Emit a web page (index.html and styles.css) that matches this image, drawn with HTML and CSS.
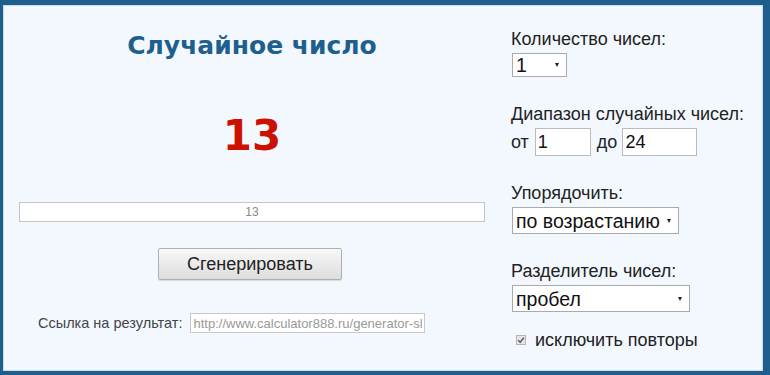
FILE: index.html
```html
<!DOCTYPE html>
<html lang="ru">
<head>
    <meta charset="UTF-8">
    <meta name="viewport" content="width=device-width, initial-scale=1.0">
    <title>Случайное число</title>
    <link rel="stylesheet" href="styles.css">
</head>
<body>
    <div id="gerador">
        <div id="resultado">
            <h1 id="titulo">Случайное число</h1>
            <div id="numero">13</div>
            <input id="lista" type="text" value="13" readonly>
            <button id="gerar">Сгенерировать</button>
            <div id="link">
                <span>Ссылка на результат:</span>
                <input type="text" value="http://www.calculator888.ru/generator-sluchainyh-chisel/" readonly>
            </div>
        </div>

        <div id="opcoes">
            <div class="campo">
                <label>Количество чисел:</label>
                <div class="seletor seletor-curto">
                    <select>
                        <option>1</option>
                        <option>2</option>
                        <option>3</option>
                    </select>
                </div>
            </div>
            <div class="campo">
                <label>Диапазон случайных чисел:</label>
                <div class="intervalo">
                    от <input id="de" type="text" value="1">
                    до <input id="ate" type="text" value="24">
                </div>
            </div>
            <div class="campo">
                <label>Упорядочить:</label>
                <div class="seletor seletor-ordem">
                    <select>
                        <option>по возрастанию</option>
                        <option>по убыванию</option>
                        <option>нет</option>
                    </select>
                </div>
            </div>
            <div class="campo">
                <label>Разделитель чисел:</label>
                <div class="seletor seletor-sep">
                    <select>
                        <option>пробел</option>
                        <option>запятая</option>
                    </select>
                </div>
            </div>
            <div id="repetir">
                <svg class="marca" width="10" height="10" viewBox="0 0 10 10">
                    <rect x="0.5" y="0.5" width="9" height="9" fill="#e4e4e4" stroke="#b5b5b5"/>
                    <path d="M2.2 5.2 L4.2 7.2 L7.8 2.8" fill="none" stroke="#555" stroke-width="1.4"/>
                </svg>
                исключить повторы
            </div>
        </div>
    </div>
</body>
</html>
```

FILE: styles.css
```css
*{
    box-sizing: border-box;
}
body{
    margin: 0;
    font-family: "Liberation Sans", Arial, sans-serif;
    color: #222;
}
#gerador{
    display: flex;
    height: 375px;
    background-color: #f2f8fe;
    border-style: solid;
    border-color: #1e5e8d;
    border-width: 5px 7px 4px 3px;
    box-shadow: inset 0 0 0 1px #cddbe8;
}
#resultado{
    width: 492px;
    display: flex;
    flex-direction: column;
    align-items: center;
    padding: 27px 10px 0 16px;
}
#titulo{
    margin: 0;
    font-family: "DejaVu Sans", Verdana, sans-serif;
    font-size: 25px;
    line-height: 28px;
    font-weight: bold;
    color: #1f5f8c;
}
#numero{
    margin-top: 55px;
    font-family: "DejaVu Sans", Verdana, sans-serif;
    font-size: 42px;
    line-height: 42px;
    font-weight: bold;
    color: #cc1100;
}
#lista{
    width: 466px;
    height: 20px;
    margin-top: 45px;
    border: 1px solid #c4c4c4;
    background: #fff;
    text-align: center;
    font-family: "Liberation Sans", Arial, sans-serif;
    font-size: 12px;
    color: #888;
    padding: 0;
}
#gerar{
    width: 184px;
    height: 32px;
    margin: 26px 4px 0 0;
    border: 1px solid #b0b0b0;
    border-radius: 2px;
    background: linear-gradient(#f8f8f8, #dddddd);
    box-shadow: 0 1px 1px rgba(0, 0, 0, .12);
    font-family: "Liberation Sans", Arial, sans-serif;
    font-size: 18px;
    color: #222;
}
#link{
    align-self: flex-start;
    display: flex;
    align-items: center;
    gap: 8px;
    margin: 33px 0 0 19px;
    font-size: 14.5px;
    color: #444;
}
#link input{
    width: 235px;
    height: 20px;
    border: 1px solid #c8c8c8;
    background: #fff;
    padding: 0 2px;
    font-family: "Liberation Sans", Arial, sans-serif;
    font-size: 13px;
    color: #999;
}
#opcoes{
    padding: 24px 0 0 16px;
    font-size: 18px;
}
.campo{
    margin-bottom: 27px;
}
.campo label{
    display: block;
    line-height: 20px;
    margin-bottom: 4px;
}
.seletor{
    position: relative;
    display: inline-block;
    margin-left: 1px;
}
.seletor select{
    appearance: none;
    -webkit-appearance: none;
    display: block;
    height: 27px;
    border: 1px solid #aaa;
    border-radius: 0;
    background: #fff;
    padding: 0 14px 0 3px;
    font-family: "Liberation Sans", Arial, sans-serif;
    font-size: 19.5px;
    color: #111;
}
.seletor::after{
    content: "";
    position: absolute;
    right: 8px;
    top: 12px;
    border-left: 2.5px solid transparent;
    border-right: 2.5px solid transparent;
    border-top: 4px solid #222;
    pointer-events: none;
}
.seletor-curto select{
    width: 55px;
    height: 24px;
}
.seletor-curto::after{
    top: 10px;
}
.seletor-ordem select{
    width: 167px;
}
.seletor-sep select{
    width: 178px;
}
.intervalo{
    display: flex;
    align-items: center;
    gap: 6px;
}
.intervalo input{
    height: 28px;
    border: 1px solid #bbb;
    background: #fff;
    padding: 0 2px;
    font-family: "Liberation Sans", Arial, sans-serif;
    font-size: 18px;
    color: #111;
}
#de{
    width: 56px;
}
#ate{
    width: 75px;
    margin-left: -1px;
}
#repetir{
    display: flex;
    align-items: center;
    gap: 9px;
    margin-top: -9px;
    padding-left: 5px;
    line-height: 20px;
}
```
